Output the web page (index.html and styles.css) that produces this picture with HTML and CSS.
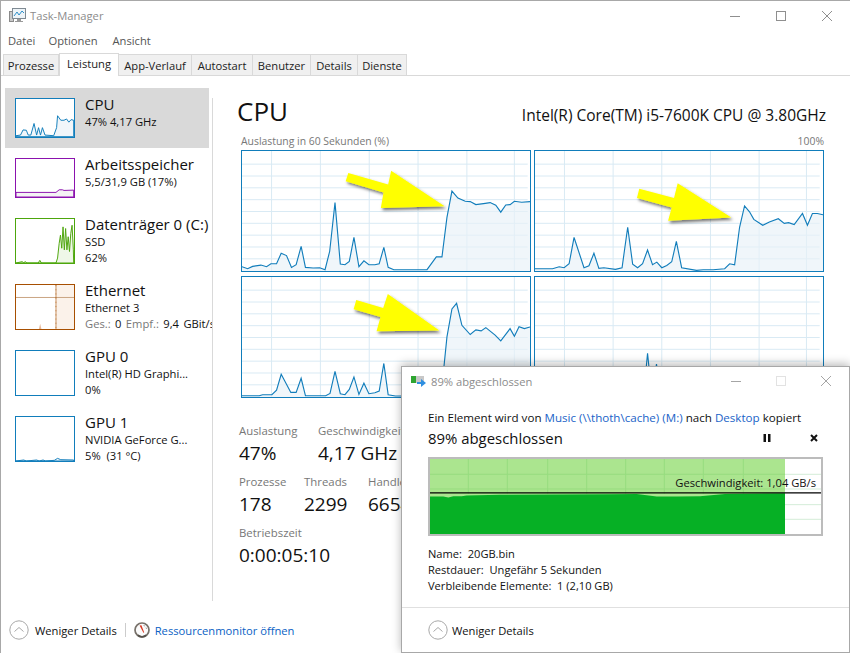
FILE: index.html
```html
<!DOCTYPE html>
<html lang="de">
<head>
<meta charset="utf-8">
<title>Task-Manager</title>
<link rel="stylesheet" href="styles.css">
</head>
<body>
<svg class="defs" width="0" height="0">
  <defs>
    <symbol id="grid" viewBox="0 0 867 365" width="867" height="365">
      <path class="gridline" d="M89 0V365M236 0V365M383 0V365M530 0V365M677 0V365M820 0V365M0 40H860M0 76H860M0 112H860M0 148H860M0 184H860M0 220H860M0 256H860M0 292H860M0 328H860"/>
    </symbol>
    <filter id="arrowshadow" x="-20%" y="-20%" width="150%" height="150%">
      <feDropShadow dx="5" dy="7" stdDeviation="5" flood-color="#000" flood-opacity=".55"/>
    </filter>
  </defs>
</svg>
<div class="window">
  <header class="titlebar">
    <svg class="appicon" viewBox="0 0 17 15" width="17" height="15">
      <rect x="0.5" y="3.5" width="4" height="10" fill="#c9c9c9" stroke="#8a8a8a"/>
      <rect x="3.5" y="0.5" width="13" height="10" fill="#eef4f8" stroke="#7f8a93"/>
      <path d="M5 8L8 4L10 7L13 3L15 5" fill="none" stroke="#2e8fc9" stroke-width="1"/>
      <path d="M8 11H12V13H14V14H6V13H8Z" fill="#9a9a9a"/>
    </svg>
    <span class="apptitle">Task-Manager</span>
    <div class="wincontrols">
      <svg viewBox="0 0 10 10" width="10" height="10"><path class="ctl" d="M0 5.5H10"/></svg>
      <svg viewBox="0 0 10 10" width="10" height="10"><rect class="ctl" x=".5" y=".5" width="9" height="9"/></svg>
      <svg viewBox="0 0 10 10" width="10" height="10"><path class="ctl" d="M0 0L10 10M10 0L0 10"/></svg>
    </div>
  </header>
  <nav class="menubar"><span>Datei</span><span class="m2">Optionen</span><span>Ansicht</span></nav>
  <div class="tabs">
    <span class="tab t1">Prozesse</span>
    <span class="tab active t2">Leistung</span>
    <span class="tab t3">App-Verlauf</span>
    <span class="tab t4">Autostart</span>
    <span class="tab t5">Benutzer</span>
    <span class="tab t6">Details</span>
    <span class="tab t7">Dienste</span>
  </div>
  <div class="content">
    <aside class="sidebar">
      <div class="item selected short">
        <div class="thumb th-blue">
          <svg viewBox="46 296 180 118" preserveAspectRatio="none">
            <path class="fill-blue" d="M46 413V410L60 408L68 392L78 393L84 408L92 408L102 372L110 408L116 385L122 408L128 385L136 408L163 410L172 385L175 348L185 362L195 362L203 358L210 368L217 360L225 362V413Z"/>
          </svg>
        </div>
        <div class="info"><div class="name">CPU</div><div class="sub">47% 4,17 GHz</div></div>
      </div>
      <div class="item short">
        <div class="thumb th-purple">
          <svg viewBox="46 476 180 116" preserveAspectRatio="none">
            <path class="fill-purple" d="M46 592V578H170L180 570H190L195 572L225 571V592Z"/>
          </svg>
        </div>
        <div class="info"><div class="name">Arbeitsspeicher</div><div class="sub">5,5/31,9 GB (17%)</div></div>
      </div>
      <div class="item">
        <div class="thumb tall th-green">
          <svg viewBox="46 56 180 134" preserveAspectRatio="none">
            <path class="fill-green" d="M46 190L65 186L70 189L75 186L80 190L115 190L120 182L125 190L170 190L175 175L180 130L184 105L188 145L192 80L196 150L200 85L204 150L208 110L212 155L216 100L220 75L224 150L225 190Z"/>
          </svg>
        </div>
        <div class="info"><div class="name">Datenträger 0 (C:)</div><div class="sub">SSD</div><div class="sub">62%</div></div>
      </div>
      <div class="item">
        <div class="thumb tall th-brown">
          <svg viewBox="46 254 180 134" preserveAspectRatio="none">
            <rect x="170" y="254" width="56" height="134" fill="#fbf2ea"/>
            <path d="M46 292H226" stroke="#c9a27f" stroke-width="3" fill="none"/>
            <path d="M170 254V388" stroke="#a74f01" stroke-width="3" stroke-dasharray="3 1" fill="none"/>
            <path d="M117 388L121 372L125 388Z" fill="#e8b99a"/>
          </svg>
        </div>
        <div class="info"><div class="name">Ethernet</div><div class="sub">Ethernet 3</div><div class="sub spaced"><span class="muted">Ges.:</span> 0 <span class="muted">Empf.:</span> 9,4 GBit/s</div></div>
      </div>
      <div class="item">
        <div class="thumb tall th-blue"></div>
        <div class="info"><div class="name">GPU 0</div><div class="sub">Intel(R) HD Graphi...</div><div class="sub">0%</div></div>
      </div>
      <div class="item">
        <div class="thumb tall th-blue">
          <svg viewBox="46 650 180 134" preserveAspectRatio="none">
            <path class="fill-blue" d="M46 784L70 781L78 784L110 781L118 784L130 781L138 784L165 782L175 776L185 780L225 781V784Z"/>
          </svg>
        </div>
        <div class="info"><div class="name">GPU 1</div><div class="sub">NVIDIA GeForce G...</div><div class="sub">5%&nbsp; (31 °C)</div></div>
      </div>
    </aside>
    <div class="vsep"></div>
    <main class="main">
      <div class="headline"><h1>CPU</h1><div class="cpuname">Intel(R) Core(TM) i5-7600K CPU @ 3.80GHz</div></div>
      <div class="chartlabels"><span>Auslastung in 60 Sekunden (%)</span><span>100%</span></div>
      <div class="charts">
        <div class="chart">
          <svg viewBox="18 60 867 365" preserveAspectRatio="none">
            <use href="#grid" x="18" y="60"/>
            <path class="area" d="M18 412L35 418L50 411L75 407L92 412L105 403L122 403L136 371L152 378L167 414L181 406L196 350L209 414L232 416L252 415L268 421L282 365L298 217L314 404L328 406L341 396L355 323L370 412L385 394L400 406L418 406L431 403L445 353L458 414L475 421L575 421L603 382L620 382L635 262L650 182L668 203L690 213L705 214L722 223L745 220L765 217L782 225L797 246L812 224L825 223L838 213L860 216L885 214V425H18Z"/>
            <path class="line" d="M18 412L35 418L50 411L75 407L92 412L105 403L122 403L136 371L152 378L167 414L181 406L196 350L209 414L232 416L252 415L268 421L282 365L298 217L314 404L328 406L341 396L355 323L370 412L385 394L400 406L418 406L431 403L445 353L458 414L475 421L575 421L603 382L620 382L635 262L650 182L668 203L690 213L705 214L722 223L745 220L765 217L782 225L797 246L812 224L825 223L838 213L860 216L885 214"/>
            <polygon class="arrow" points="338,127 458,162 467,120 628,228 436,233 444,186 330,152"/>
          </svg>
        </div>
        <div class="chart">
          <svg viewBox="12 60 870 365" preserveAspectRatio="none">
            <use href="#grid" x="12" y="60"/>
            <path class="area" d="M12 418L65 418L85 412L100 415L115 403L130 323L160 415L175 409L190 371L205 417L220 415L255 420L275 415L292 292L307 404L322 415L337 403L352 361L367 406L380 398L395 415L410 408L425 397L439 335L455 415L500 423L520 421L550 421L585 418L600 403L615 406L630 292L645 227L660 245L673 268L700 286L720 276L747 266L765 280L778 278L795 284L820 250L835 286L850 250L865 250L882 254V425H12Z"/>
            <path class="line" d="M12 418L65 418L85 412L100 415L115 403L130 323L160 415L175 409L190 371L205 417L220 415L255 420L275 415L292 292L307 404L322 415L337 403L352 361L367 406L380 398L395 415L410 408L425 397L439 335L455 415L500 423L520 421L550 421L585 418L600 403L615 406L630 292L645 227L660 245L673 268L700 286L720 276L747 266L765 280L778 278L795 284L820 250L835 286L850 250L865 250L882 254"/>
            <polygon class="arrow" points="327,175 432,203 443,158 605,262 414,272 425,232 320,203"/>
          </svg>
        </div>
        <div class="chart">
          <svg viewBox="18 18 867 365" preserveAspectRatio="none">
            <use href="#grid" x="18" y="18"/>
            <path class="area" d="M18 379L70 379L80 376L108 376L122 362L136 314L165 369L181 369L196 326L209 379L270 379L283 372L298 305L314 373L328 376L341 360L355 322L370 375L385 341L400 373L418 370L431 365L445 281L458 376L480 380L600 380L620 350L635 200L650 115L664 98L680 165L705 193L722 179L738 182L752 172L780 195L797 212L825 175L838 198L852 169L868 175L885 170V383H18Z"/>
            <path class="line" d="M18 379L70 379L80 376L108 376L122 362L136 314L165 369L181 369L196 326L209 379L270 379L283 372L298 305L314 373L328 376L341 360L355 322L370 375L385 341L400 373L418 370L431 365L445 281L458 376L480 380L600 380L620 350L635 200L650 115L664 98L680 165L705 193L722 179L738 182L752 172L780 195L797 212L825 175L838 198L852 169L868 175L885 170"/>
            <polygon class="arrow" points="362,88 443,112 457,70 612,181 423,183 435,140 354,116"/>
          </svg>
        </div>
        <div class="chart">
          <svg viewBox="12 18 870 365" preserveAspectRatio="none">
            <use href="#grid" x="12" y="18"/>
            <path class="line" d="M12 379L340 379L352 250L365 379L379 283L392 379L650 379L660 290L672 379L882 379"/>
          </svg>
        </div>
      </div>
      <div class="stats">
        <div class="statrow">
          <div class="stat w79"><div class="label">Auslastung</div><div class="value">47%</div></div>
          <div class="stat"><div class="label">Geschwindigkeit</div><div class="value">4,17 GHz</div></div>
        </div>
        <div class="statrow">
          <div class="stat w65"><div class="label">Prozesse</div><div class="value">178</div></div>
          <div class="stat w64"><div class="label">Threads</div><div class="value">2299</div></div>
          <div class="stat"><div class="label">Handles</div><div class="value">66540</div></div>
        </div>
        <div class="statrow">
          <div class="stat"><div class="label">Betriebszeit</div><div class="value">0:00:05:10</div></div>
        </div>
      </div>
    </main>
  </div>
  <footer class="footer">
    <svg class="chev" viewBox="0 0 20 20" width="20" height="20"><circle cx="10" cy="10" r="9.2"/><path d="M5.5 11.5L10 7.5L14.5 11.5"/></svg>
    <span class="less">Weniger Details</span>
    <span class="fsep"></span>
    <svg class="resicon" viewBox="0 0 16 16" width="16" height="16">
      <circle cx="8" cy="8" r="7" fill="#fbfbfb" stroke="#77716a" stroke-width="1.7"/>
      <path d="M3.8 13.2A7 7 0 0 0 12.2 13.2" fill="none" stroke="#55504a" stroke-width="1.7"/>
      <path d="M9.5 3.5L11 4M12 5.5L12.6 7" stroke="#a8a8a8" stroke-width="1" fill="none"/>
      <path d="M5.6 3.6L7.4 3.2L10.2 10.4L9.4 10.8Z" fill="#d8341f"/>
    </svg>
    <span class="link">Ressourcenmonitor öffnen</span>
  </footer>

  <section class="dialog">
    <div class="dlgtitle">
      <svg class="dlgicon" viewBox="0 0 15 12" width="15" height="12">
        <rect x="0" y="1" width="13" height="7" fill="#c8c8c8"/>
        <rect x="0" y="1" width="5" height="7" fill="#2fa531"/>
        <path d="M6 7H10V4L15 8L10 12V9H6Z" fill="#2f8fe0"/>
      </svg>
      <span class="dlgname">89% abgeschlossen</span>
      <div class="dlgcontrols">
        <svg viewBox="0 0 10 10" width="10" height="10"><path class="ctl light" d="M0 5.5H10"/></svg>
        <svg viewBox="0 0 10 10" width="10" height="10"><rect class="ctl lighter" x=".5" y=".5" width="9" height="9"/></svg>
        <svg viewBox="0 0 10 10" width="10" height="10"><path class="ctl light" d="M0 0L10 10M10 0L0 10"/></svg>
      </div>
    </div>
    <div class="dlgbody">
      <p class="copyline">Ein Element wird von <span class="blue">Music (\\thoth\cache) (M:)</span> nach <span class="blue">Desktop</span> kopiert</p>
      <div class="progressrow">
        <span class="progress">89% abgeschlossen</span>
        <div class="pbuttons">
          <svg viewBox="0 0 8 8" width="8" height="8"><path d="M0.5 0H3V8H0.5ZM5 0H7.5V8H5Z" fill="#111"/></svg>
          <svg viewBox="0 0 8 8" width="8" height="8"><path d="M1 1L7 7M7 1L1 7" stroke="#111" stroke-width="2"/></svg>
        </div>
      </div>
      <div class="speed">
        <svg viewBox="90 293 1173 230" preserveAspectRatio="none">
          <rect x="90" y="293" width="1065" height="230" fill="#abe58f"/>
          <path d="M205 293V400M322 293V400M443 293V400M560 293V400M677 293V400M793 293V400M910 293V400M1030 293V400M90 340H1155M90 385H1155" stroke="#97dc7e" stroke-width="3" fill="none"/>
          <path d="M1155 340H1263M1155 385H1263M1155 433H1263M1155 478H1263" stroke="#d3ecd8" stroke-width="3" fill="none"/>
          <path d="M90 408L130 408L145 411L160 407L185 407L200 405L300 403L630 401L710 400L770 408L830 408L900 407L975 400L1155 398V523H90Z" fill="#06b025"/>
          <path d="M90 397H1263" stroke="#000" stroke-width="3.5" fill="none"/>
        </svg>
        <span class="speedtext">Geschwindigkeit: 1,04 GB/s</span>
      </div>
      <div class="meta">
        <div>Name:&nbsp; 20GB.bin</div>
        <div>Restdauer:&nbsp; Ungefähr 5 Sekunden</div>
        <div>Verbleibende Elemente:&nbsp; 1 (2,10 GB)</div>
      </div>
    </div>
    <div class="dlgfooter">
      <svg class="chev" viewBox="0 0 20 20" width="20" height="20"><circle cx="10" cy="10" r="9.2"/><path d="M5.5 11.5L10 7.5L14.5 11.5"/></svg>
      <span class="less">Weniger Details</span>
    </div>
  </section>
</div>
</body>
</html>
```
FILE: styles.css
```css
* { box-sizing: border-box; }
html, body { margin: 0; padding: 0; background: #fff; }
body { width: 850px; height: 653px; overflow: hidden; font-family: "Open Sans", "Noto Sans", sans-serif; color: #111; }
.defs { position: absolute; }
.gridline { fill: none; stroke: #d9eaf4; stroke-width: 3; }

.window { position: relative; width: 850px; height: 653px; border-top: 1px solid #a8a8a8; border-left: 1px solid #a8a8a8; overflow: hidden; display: flex; flex-direction: column; }

.titlebar { height: 29px; flex: none; display: flex; align-items: center; padding-left: 8px; }
.appicon { margin-right: 4px; }
.apptitle { font-size: 11.2px; color: #8c8c8c; }
.wincontrols { margin-left: auto; display: flex; gap: 36px; margin-right: 18px; }
.ctl { fill: none; stroke: #8f8f8f; stroke-width: 1; }
.ctl.light { stroke: #a5a5a5; }
.ctl.lighter { stroke: #e2e2e2; }

.menubar { height: 22px; flex: none; display: flex; gap: 14px; padding: 0 0 2px 7px; font-size: 11.2px; color: #555; align-items: center; }
.menubar .m2 { margin: 0 1px 0 -1px; }

.tabs { height: 24px; flex: none; display: flex; align-items: flex-end; padding-left: 2px; border-bottom: 1px solid #d9d9d9; padding-top: 1px; }
.tab { height: 21px; background: #f0f0f0; border: 1px solid #d9d9d9; border-left: 0; border-bottom: 0; font-size: 11.2px; color: #222; display: flex; align-items: center; justify-content: center; flex: none; }
.tab.active { height: 23px; background: #fff; border-left: 1px solid #d9d9d9; margin-bottom: -1px; padding-bottom: 3px; }
.t1 { width: 56px; border-left: 1px solid #d9d9d9; }
.t2 { width: 60px; }
.t3 { width: 73px; }
.t4 { width: 61px; }
.t5 { width: 58px; }
.t6 { width: 47px; }
.t7 { width: 49px; }

.content { flex: 1; min-height: 0; display: flex; }
.sidebar { width: 211px; flex: none; padding: 12px 0 0 4px; overflow: hidden; }
.item { display: flex; height: 66px; padding: 10px 0 0 10px; width: 204px; }
.item.short { height: 60px; }
.item.selected { background: #d9d9d9; }
.thumb { width: 60px; height: 40px; border: 1px solid; flex: none; background: #fff; overflow: hidden; }
.thumb.tall { height: 46px; }
.thumb svg { display: block; width: 100%; height: 100%; }
.th-blue { border-color: #117dbb; }
.th-purple { border-color: #8b12ae; }
.th-green { border-color: #4da60c; }
.th-brown { border-color: #a74f01; }
.fill-blue { fill: #f1f6fa; stroke: #117dbb; stroke-width: 3; }
.fill-purple { fill: #f4f2f4; stroke: #8b12ae; stroke-width: 3; }
.fill-green { fill: #eff7e8; stroke: #4da60c; stroke-width: 3; }
.info { margin-left: 10px; margin-top: -4px; white-space: nowrap; }
.name { font-size: 15px; line-height: 20px; color: #111; }
.sub { font-size: 11.2px; line-height: 15.5px; color: #111; }
.muted { color: #777; }
.spaced { word-spacing: 1.5px; }

.vsep { width: 1px; flex: none; margin: 22px 0 7px; background: #d9d9d9; }

.main { flex: 1; min-width: 0; padding: 0 0 0 25px; }
.headline { height: 57px; display: flex; justify-content: space-between; align-items: flex-start; padding-right: 24px; }
h1 { margin: 17px 0 0 -1px; font-size: 26px; font-weight: 400; line-height: 36px; color: #111; }
.cpuname { font-size: 15.5px; margin-top: 29px; line-height: 20px; color: #111; }
.chartlabels { height: 17px; display: flex; justify-content: space-between; font-size: 10.4px; line-height: 17px; color: #777; padding: 0 26px 0 3px; }
.charts { margin-left: 3px; display: grid; grid-template-columns: 290px 290px; grid-template-rows: 122px 122px; column-gap: 3px; row-gap: 4px; }
.chart { border: 1px solid #117dbb; background: #fff; overflow: hidden; }
.chart svg { display: block; width: 100%; height: 100%; }
.line { fill: none; stroke: #117dbb; stroke-width: 3.4; }
.area { fill: #e8f1f7; fill-opacity: .65; }
.arrow { fill: #ffff00; filter: url(#arrowshadow); }

.stats { margin: 25px 0 0 1px; display: flex; flex-direction: column; gap: 5px; white-space: nowrap; }
.statrow { display: flex; height: 46px; }
.stat.w79 { width: 79px; }
.stat.w65 { width: 65px; }
.stat.w64 { width: 64px; }
.label { font-size: 11.4px; line-height: 15px; color: #777; }
.value { font-size: 19px; line-height: 31px; color: #111; }

.footer { height: 44px; flex: none; display: flex; align-items: center; padding-left: 8px; margin-bottom: 1px; }
.chev { flex: none; }
.chev circle { fill: #fff; stroke: #a8a8a8; stroke-width: 1; }
.chev path { fill: none; stroke: #a8a8a8; stroke-width: 1; }
.less { font-size: 11.2px; margin-left: 6px; color: #111; }
.fsep { width: 1px; height: 14px; background: #ccc; margin: 0 8px 0 8px; }
.link { font-size: 11.2px; color: #0a5fc4; margin-left: 5px; }

.dialog { position: absolute; left: 400px; top: 365px; width: 449px; height: 287px; background: #fff; border: 1px solid #a8a8a8; box-shadow: 0 -2px 9px rgba(0,0,0,.28); display: flex; flex-direction: column; }
.dlgtitle { height: 28px; flex: none; display: flex; align-items: center; padding-left: 9px; }
.dlgicon { margin-right: 5px; }
.dlgname { font-size: 11.2px; color: #8c8c8c; }
.dlgcontrols { margin-left: auto; margin-right: 18px; display: flex; gap: 35px; }
.dlgbody { flex: 1; min-height: 0; padding: 14px 26px 0; border-bottom: 1px solid #e0e0e0; }
.copyline { margin: 0; font-size: 11.6px; line-height: 18px; color: #111; white-space: nowrap; }
.blue { color: #1a63c8; }
.progressrow { height: 22px; display: flex; align-items: center; justify-content: space-between; }
.progress { font-size: 14.9px; color: #111; }
.pbuttons { display: flex; gap: 39px; margin-right: 5px; }
.speed { position: relative; margin-top: 8px; height: 79px; border: 2px solid #bcbcbc; width: 395px; }
.speed svg { display: block; width: 100%; height: 100%; }
.speedtext { position: absolute; right: 5px; top: 16px; font-size: 11.2px; line-height: 16px; color: #111; }
.meta { margin-top: 10px; font-size: 11.1px; line-height: 16px; color: #111; }
.dlgfooter { height: 44px; flex: none; display: flex; align-items: center; padding-left: 26px; }
.dlgfooter .less { margin-left: 4px; }
```
